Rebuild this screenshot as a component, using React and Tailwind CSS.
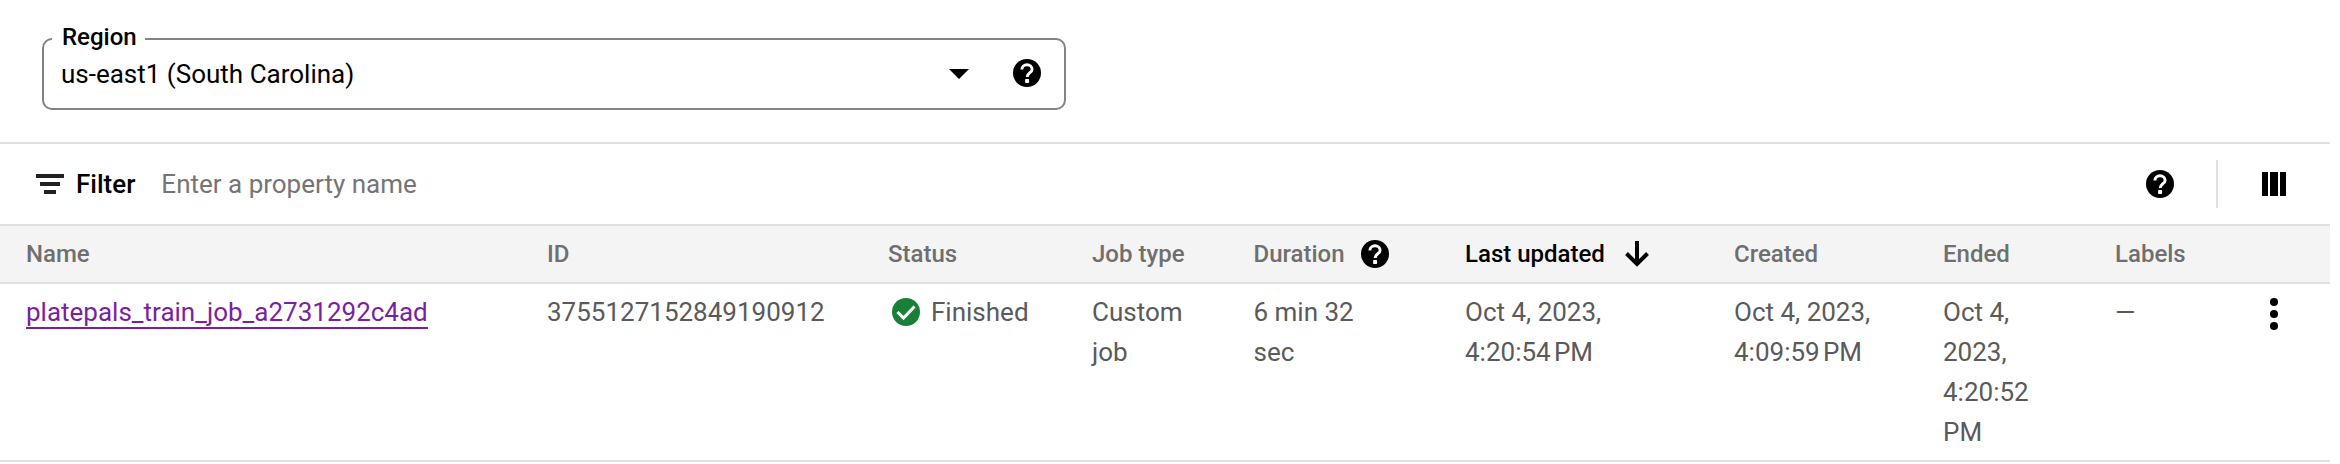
function HelpIcon() {
  return (
    <svg className="size-7 shrink-0" viewBox="0 0 28 28">
      <circle cx="14" cy="14" r="14" fill="#000" />
      <path d="M8.9 10.4a5.1 4.6 0 0 1 10.2 0c0 3.1-4.9 3.6-4.9 7.6" fill="none" stroke="#fff" strokeWidth="2.9" />
      <rect x="12.1" y="20" width="4" height="4" rx="0.8" fill="#fff" />
    </svg>
  );
}

function FilterIcon() {
  return (
    <svg className="h-5 w-7 shrink-0" viewBox="0 0 28 20" fill="#202124">
      <path d="M0 0h28v4H0zM4 8h20v4H4zM8 16h12v4H8z" />
    </svg>
  );
}

function ColumnsIcon() {
  return (
    <svg className="size-6 shrink-0" viewBox="0 0 24 24" fill="#000">
      <path d="M0 0h6v24H0zM8 0h8v24H8zM18 0h6v24h-6z" />
    </svg>
  );
}

function CheckIcon() {
  return (
    <svg className="size-7 shrink-0" viewBox="0 0 28 28">
      <circle cx="14" cy="14" r="14" fill="#188038" />
      <path d="M5.5 14l6 6L22.5 8.5" fill="none" stroke="#fff" strokeWidth="3" />
    </svg>
  );
}

function ArrowDownIcon() {
  return (
    <svg className="h-[26px] w-6 shrink-0" viewBox="0 0 24 26" fill="none" stroke="#000" strokeWidth="4">
      <path d="M12 0v23M1.5 12.5L12 23l10.5-10.5" />
    </svg>
  );
}

function MoreIcon() {
  return (
    <svg className="h-8 w-2" viewBox="0 0 8 32" fill="#000">
      <circle cx="4" cy="4" r="4" />
      <circle cx="4" cy="16" r="4" />
      <circle cx="4" cy="28" r="4" />
    </svg>
  );
}

const COLUMNS =
  'grid grid-cols-[521px_341px_204px_161.5px_211.5px_269px_209px_172px_1fr] pl-[26px]';

function RegionSelect() {
  return (
    <fieldset className="mt-[25px] ml-[42px] h-[85px] w-[1024px] rounded-[10px] border-2 border-[#808488] pl-2">
      <legend className="h-7 pr-2 pl-[10px] text-2xl leading-6 font-medium text-black">Region</legend>
      <div className="flex h-10 items-center pr-[23px] pl-[9px]">
        <span className="flex-1 pt-[2px]">us-east1 (South Carolina)</span>
        <svg className="mt-[2px] mr-11 h-[10px] w-5" viewBox="0 0 20 10">
          <path d="M0 0h20L10 10z" />
        </svg>
        <HelpIcon />
      </div>
    </fieldset>
  );
}

function FilterBar() {
  return (
    <div className="mt-8 flex h-[84px] items-center border-y-2 border-[#e0e0e0] pr-11 pl-9">
      <FilterIcon />
      <span className="ml-3 font-medium">Filter</span>
      <span className="ml-[26px] flex-1 text-[#757575]">Enter a property name</span>
      <HelpIcon />
      <div className="mr-11 ml-[42px] h-12 w-[2px] bg-[#e0e0e0]" />
      <ColumnsIcon />
    </div>
  );
}

function JobsTable() {
  return (
    <div>
      <div
        className={`${COLUMNS} h-[58px] items-center border-b-2 border-[#e0e0e0] bg-[#f4f4f4] text-2xl font-medium text-[#6f6f6f]`}
      >
        <span>Name</span>
        <span>ID</span>
        <span>Status</span>
        <span>Job type</span>
        <span className="flex items-center gap-4">
          Duration
          <HelpIcon />
        </span>
        <span className="flex items-center gap-5 text-black">
          Last updated
          <ArrowDownIcon />
        </span>
        <span>Created</span>
        <span>Ended</span>
        <span>Labels</span>
      </div>
      <div className={`${COLUMNS} h-[178px] items-start border-b-2 border-[#e0e0e0] pt-2 leading-10 text-[#5a5a5a]`}>
        <span className="flex">
          <a className="h-[37px] border-b-2 border-[#7b1fa2] text-[#7b1fa2]">platepals_train_job_a2731292c4ad</a>
        </span>
        <span>3755127152849190912</span>
        <span className="flex items-center gap-[11px] pl-1">
          <CheckIcon />
          Finished
        </span>
        <span className="w-[110px]">Custom job</span>
        <span className="w-[120px]">6 min 32 sec</span>
        <span>
          Oct 4, 2023,
          <br />
          4:20:54{'\u202f'}PM
        </span>
        <span>
          Oct 4, 2023,
          <br />
          4:09:59{'\u202f'}PM
        </span>
        <span>
          Oct 4,
          <br />
          2023,
          <br />
          4:20:52
          <br />
          PM
        </span>
        <span className="flex items-start justify-between pr-[52px]">
          —
          <span className="pt-[6px]">
            <MoreIcon />
          </span>
        </span>
      </div>
    </div>
  );
}

export default function App() {
  return (
    <div className="flex h-[464px] w-[2340px] flex-col overflow-hidden bg-white font-['Roboto',sans-serif] text-[26px] leading-10 text-black">
      <div className="w-[2330px]">
        <RegionSelect />
        <FilterBar />
        <JobsTable />
      </div>
    </div>
  );
}
